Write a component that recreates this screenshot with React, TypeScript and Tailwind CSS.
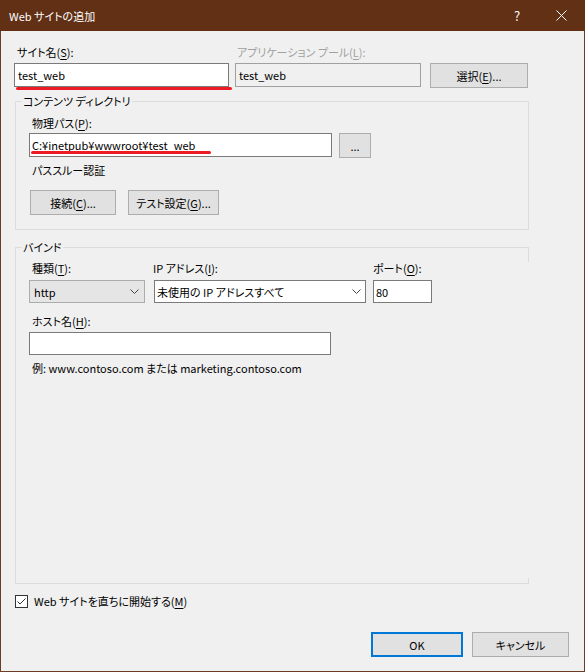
import React from "react";

const FONT = "font-['Noto_Sans_CJK_JP','Noto_Sans',sans-serif] [font-feature-settings:'palt']";

function U({ children }: { children: React.ReactNode }) {
  return <span className="underline decoration-1 underline-offset-[2px]">{children}</span>;
}

function Chevron() {
  return (
    <svg width="9" height="5" viewBox="0 0 9 5" className="block">
      <path d="M0.5 0.5 L4.5 4.5 L8.5 0.5" stroke="#444" strokeWidth="1" fill="none" />
    </svg>
  );
}

export default function App() {
  return (
    <div className={`w-[585px] h-[672px] bg-[#6a3d24] flex flex-col text-[11px] leading-[16px] text-black ${FONT}`}>
      {/* Title bar */}
      <div className="h-[31px] shrink-0 bg-[#613015] flex items-center text-white">
        <span className="ml-[9px] text-[11px]">Web サイトの追加</span>
        <span className="ml-auto w-[10px] text-center text-[13px]">?</span>
        <svg width="11" height="11" viewBox="0 0 11 11" className="ml-[34px] mr-[18px] block">
          <path d="M0.5 0.5 L10.5 10.5 M10.5 0.5 L0.5 10.5" stroke="#ffffff" strokeWidth="1" fill="none" />
        </svg>
      </div>

      {/* Body */}
      <div className="flex-1 mx-[1px] mb-[1px] bg-[#f0f0f0] flex flex-col">
        {/* Top row */}
        <div className="flex pt-[13px] pl-[13px]">
          <div className="flex flex-col w-[215px]">
            <div className="pl-[3px] h-[16px] mb-[3px]">
              サイト名(<U>S</U>):
            </div>
            <div className="h-[24px] border border-[#7a7a7a] bg-white flex items-center pl-[3px]">test_web</div>
            <div className="ml-[2px] w-[216px] h-[3px] rounded-full bg-[#ed1c24]" />
          </div>
          <div className="flex flex-col w-[186px] ml-[6px]">
            <div className="pl-[2px] h-[16px] mb-[3px] text-[#a0a0a0]">
              アプリケーション プール(<U>L</U>):
            </div>
            <div className="h-[24px] border border-[#a0a0a0] bg-[#f0f0f0] flex items-center pl-[3px]">test_web</div>
          </div>
          <div className="flex flex-col ml-[9px] pt-[19px]">
            <div className="w-[98px] h-[25px] border border-[#adadad] bg-[#e1e1e1] flex items-center justify-center">
              選択(<U>E</U>)...
            </div>
          </div>
        </div>

        {/* Content directory group */}
        <fieldset className="mt-[3px] ml-[14px] w-[514px] h-[137px] border border-[#dcdcdc] p-0 m-0">
          <legend className="ml-[6px] px-[1px] leading-[16px]">コンテンツ ディレクトリ</legend>
          <div className="pl-[13px] pt-[6px] flex flex-col">
            <div className="pl-[3px] h-[16px] mb-[2px]">
              物理パス(<U>P</U>):
            </div>
            <div className="flex items-start">
              <div className="relative w-[303px] h-[24px] border border-[#7a7a7a] bg-white flex items-center pl-[2px]">
                <span>C:¥inetpub¥wwwroot¥test_web</span>
                <div className="absolute left-[1px] top-[17px] w-[180px] h-[3px] rounded-full bg-[#ed1c24]" />
              </div>
              <div className="ml-[7px] w-[32px] h-[25px] border border-[#adadad] bg-[#e1e1e1] flex items-center justify-center">
                ...
              </div>
            </div>
            <div className="pl-[3px] mt-[4px] h-[16px]">パススルー認証</div>
            <div className="flex mt-[12px]">
              <div className="ml-[1px] w-[86px] h-[25px] border border-[#adadad] bg-[#e1e1e1] flex items-center justify-center">
                接続(<U>C</U>)...
              </div>
              <div className="ml-[12px] w-[91px] h-[25px] border border-[#adadad] bg-[#e1e1e1] flex items-center justify-center">
                テスト設定(<U>G</U>)...
              </div>
            </div>
          </div>
        </fieldset>

        {/* Binding group */}
        <fieldset className="mt-[9px] ml-[14px] w-[514px] h-[345px] border border-[#dcdcdc] p-0 m-0">
          <legend className="ml-[6px] px-[1px] leading-[16px]">バインド</legend>
          <div className="relative h-[328px] pl-[13px] pt-[5px] flex flex-col">
            <div className="flex">
              <div className="flex flex-col w-[116px]">
                <div className="pl-[3px] h-[16px] mb-[4px]">
                  種類(<U>T</U>):
                </div>
                <div className="h-[23px] border border-[#acacac] bg-[#e5e5e5] flex items-center pl-[4px] pr-[5px]">
                  <span>http</span>
                  <span className="ml-auto">
                    <Chevron />
                  </span>
                </div>
              </div>
              <div className="flex flex-col ml-[8px] w-[213px]">
                <div className="h-[16px] mb-[4px]">
                  IP アドレス(<U>I</U>):
                </div>
                <div className="ml-[1px] h-[23px] border border-[#7a7a7a] bg-white flex items-center pl-[2px] pr-[4px]">
                  <span>未使用の IP アドレスすべて</span>
                  <span className="ml-auto">
                    <Chevron />
                  </span>
                </div>
              </div>
              <div className="flex flex-col ml-[7px] w-[59px]">
                <div className="h-[16px] mb-[4px]">
                  ポート(<U>O</U>):
                </div>
                <div className="h-[23px] border border-[#7a7a7a] bg-white flex items-center pl-[2px]">80</div>
              </div>
            </div>
            <div className="pl-[3px] mt-[10px] h-[16px] mb-[3px]">
              ホスト名(<U>H</U>):
            </div>
            <div className="w-[302px] h-[23px] border border-[#7a7a7a] bg-white" />
            <div className="pl-[3px] mt-[5px] h-[16px]">例: www.contoso.com または marketing.contoso.com</div>
            <div className="absolute top-[7px] right-[-1px] w-[1px] h-[316px] bg-[#f0f0f0]" />
          </div>
        </fieldset>

        {/* Checkbox */}
        <div className="flex items-center mt-[9px] ml-[14px]">
          <svg width="13" height="13" viewBox="0 0 13 13" className="block">
            <rect x="0.5" y="0.5" width="12" height="12" fill="#ffffff" stroke="#333333" />
            <path d="M2.5 6.5 L5 9 L10.5 3.5" stroke="#333333" strokeWidth="1" fill="none" />
          </svg>
          <span className="ml-[6px]">
            Web サイトを直ちに開始する(<U>M</U>)
          </span>
        </div>

        {/* Buttons */}
        <div className="mt-auto mb-[14px] mr-[15px] flex justify-end gap-[9px]">
          <div className="w-[92px] h-[25px] border-2 border-[#0078d7] bg-[#e1e1e1] flex items-center justify-center">
            OK
          </div>
          <div className="w-[97px] h-[25px] border border-[#adadad] bg-[#e1e1e1] flex items-center justify-center">
            キャンセル
          </div>
        </div>
      </div>
    </div>
  );
}
